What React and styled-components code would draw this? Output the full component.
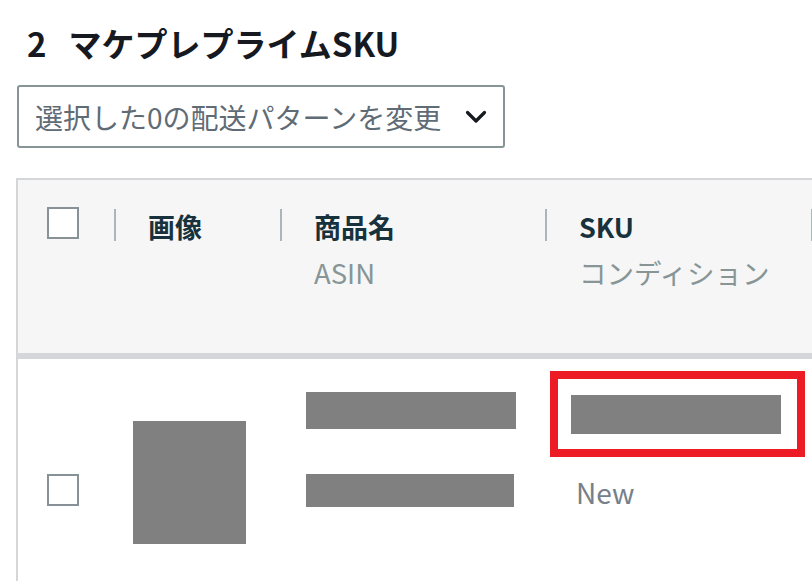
import React from "react"
import styled, { createGlobalStyle } from "styled-components"

const GlobalStyle = createGlobalStyle`
  html, body {
    margin: 0;
    padding: 0;
    background: #ffffff;
    overflow: hidden;
  }
  body {
    font-family: "Noto Sans CJK JP", "Noto Sans", sans-serif;
  }
`

const Page = styled.div`
  width: 812px;
  height: 581px;
  overflow: hidden;
  padding-top: 23px;
  box-sizing: border-box;
`

const Title = styled.h2`
  margin: 0 0 0 27px;
  font-size: 33px;
  line-height: 41px;
  font-weight: 700;
  color: #16191f;
  white-space: nowrap;
  .num {
    margin-right: 22px;
  }
`

const Dropdown = styled.button`
  margin: 21px 0 0 17px;
  width: 488px;
  height: 63px;
  box-sizing: border-box;
  border: 2px solid #879596;
  border-radius: 3px;
  background: #ffffff;
  display: flex;
  align-items: center;
  justify-content: space-between;
  padding: 0 16px 0 16px;
  font-family: inherit;
  font-size: 28px;
  color: #5f6b75;
  cursor: pointer;
  svg {
    flex-shrink: 0;
  }
`

const Table = styled.div`
  margin: 30px 0 0 16px;
  border-left: 2px solid #d5d6da;
  border-top: 2px solid #d5d6da;
`

const columns = "96px 166px 265px 266px 1fr"

const HeaderRow = styled.div`
  display: grid;
  grid-template-columns: ${columns};
  align-items: start;
  height: 179px;
  box-sizing: border-box;
  padding-top: 27px;
  background: #f6f6f6;
  border-bottom: 6px solid #d5d6da;
`

const HeaderCell = styled.div`
  display: flex;
  align-items: flex-start;
  padding-left: ${({ $pad }) => $pad || 0}px;
`

const Divider = styled.span`
  width: 2px;
  height: 32px;
  margin-top: 2px;
  background: #aab7b8;
  flex-shrink: 0;
`

const LabelBlock = styled.div`
  margin-left: 32px;
  padding-top: 2px;
  white-space: nowrap;
`

const Label = styled.div`
  font-size: 27px;
  line-height: 36px;
  font-weight: 700;
  color: #17323c;
`

const SubLabel = styled.div`
  margin-top: 9px;
  font-size: 27.5px;
  line-height: 36px;
  color: #879596;
`

const Checkbox = styled.span`
  display: block;
  width: 32px;
  height: 32px;
  box-sizing: border-box;
  border: 2px solid #879196;
  background: #ffffff;
`

const BodyRow = styled.div`
  display: grid;
  grid-template-columns: ${columns};
  align-items: start;
  height: 240px;
`

const BodyCell = styled.div`
  padding-top: ${({ $top }) => $top}px;
  padding-left: ${({ $left }) => $left}px;
`

const Redacted = styled.div`
  width: ${({ $w }) => $w}px;
  height: ${({ $h }) => $h}px;
  background: #808080;
  margin-top: ${({ $mt }) => $mt || 0}px;
`

const Highlight = styled.div`
  width: 255px;
  height: 86px;
  box-sizing: border-box;
  border: 8px solid #ed1c24;
  padding: 16px 0 0 13px;
`

const Condition = styled.div`
  margin: 17px 0 0 26px;
  font-size: 28px;
  line-height: 36px;
  color: #76808a;
`

const Chevron = () => (
  <svg width="22" height="14" viewBox="0 0 22 14">
    <polyline
      points="2.5,2.5 11,11 19.5,2.5"
      fill="none"
      stroke="#16191f"
      strokeWidth="3.2"
      strokeLinecap="round"
      strokeLinejoin="round"
    />
  </svg>
)

const headers = [
  { label: "画像" },
  { label: "商品名", sub: "ASIN" },
  { label: "SKU", sub: "コンディション" },
]

const App = () => (
  <>
    <GlobalStyle />
    <Page>
      <Title>
        <span className="num">2</span>マケプレプライムSKU
      </Title>
      <Dropdown type="button">
        <span>選択した0の配送パターンを変更</span>
        <Chevron />
      </Dropdown>
      <Table>
        <HeaderRow>
          <HeaderCell $pad={29}>
            <Checkbox />
          </HeaderCell>
          {headers.map((h) => (
            <HeaderCell key={h.label}>
              <Divider />
              <LabelBlock>
                <Label>{h.label}</Label>
                {h.sub && <SubLabel>{h.sub}</SubLabel>}
              </LabelBlock>
            </HeaderCell>
          ))}
          <HeaderCell>
            <Divider />
          </HeaderCell>
        </HeaderRow>
        <BodyRow>
          <BodyCell $top={115} $left={29}>
            <Checkbox />
          </BodyCell>
          <BodyCell $top={62} $left={19}>
            <Redacted $w={113} $h={123} />
          </BodyCell>
          <BodyCell $top={33} $left={26}>
            <Redacted $w={210} $h={37} />
            <Redacted $w={208} $h={33} $mt={45} />
          </BodyCell>
          <BodyCell $top={12} $left={5}>
            <Highlight>
              <Redacted $w={210} $h={39} />
            </Highlight>
            <Condition>New</Condition>
          </BodyCell>
        </BodyRow>
      </Table>
    </Page>
  </>
)

export default App
